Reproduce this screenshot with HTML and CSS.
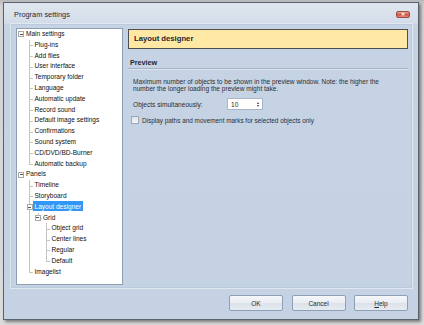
FILE: index.html
```html
<!DOCTYPE html>
<html>
<head>
<meta charset="utf-8">
<link rel="stylesheet" href="styles.css">
</head>
<body>
<div class="window">
  <div class="titlebar">
    <span class="title">Program settings</span>
    <span class="close">&#x2715;</span>
  </div>
  <div class="frame">
    <div class="treebox">
      <ul class="tree">
        <li class="l0"><div class="row"><span class="exp"></span><span class="txt">Main settings</span></div>
          <ul>
            <li class="l1"><div class="row"><span class="txt">Plug-ins</span></div></li>
            <li class="l1"><div class="row"><span class="txt">Add files</span></div></li>
            <li class="l1"><div class="row"><span class="txt">User interface</span></div></li>
            <li class="l1"><div class="row"><span class="txt">Temporary folder</span></div></li>
            <li class="l1"><div class="row"><span class="txt">Language</span></div></li>
            <li class="l1"><div class="row"><span class="txt">Automatic update</span></div></li>
            <li class="l1"><div class="row"><span class="txt">Record sound</span></div></li>
            <li class="l1"><div class="row"><span class="txt">Default image settings</span></div></li>
            <li class="l1"><div class="row"><span class="txt">Confirmations</span></div></li>
            <li class="l1"><div class="row"><span class="txt">Sound system</span></div></li>
            <li class="l1"><div class="row"><span class="txt">CD/DVD/BD-Burner</span></div></li>
            <li class="l1"><div class="row"><span class="txt">Automatic backup</span></div></li>
          </ul>
        </li>
        <li class="l0"><div class="row"><span class="exp"></span><span class="txt">Panels</span></div>
          <ul>
            <li class="l1"><div class="row"><span class="txt">Timeline</span></div></li>
            <li class="l1"><div class="row"><span class="txt">Storyboard</span></div></li>
            <li class="l1"><div class="row"><span class="exp"></span><span class="txt sel">Layout designer</span></div>
              <ul>
                <li class="l2"><div class="row"><span class="exp"></span><span class="txt">Grid</span></div>
                  <ul>
                    <li class="l3"><div class="row"><span class="txt">Object grid</span></div></li>
                    <li class="l3"><div class="row"><span class="txt">Center lines</span></div></li>
                    <li class="l3"><div class="row"><span class="txt">Regular</span></div></li>
                    <li class="l3"><div class="row"><span class="txt">Default</span></div></li>
                  </ul>
                </li>
              </ul>
            </li>
            <li class="l1"><div class="row"><span class="txt">Imagelist</span></div></li>
          </ul>
        </li>
      </ul>
    </div>
    <div class="pane">
      <div class="header">Layout designer</div>
      <div class="section">Preview</div>
      <p class="desc">Maximum number of objects to be shown in the preview window. Note: the higher the number the longer loading the preview might take.</p>
      <div class="field">
        <span class="label">Objects simultaneously:</span>
        <span class="spin"><span class="val">10</span><span class="arrows"><span class="up"></span><span class="down"></span></span></span>
      </div>
      <div class="check">
        <span class="box"></span>
        <span class="ctext">Display paths and movement marks for selected objects only</span>
      </div>
    </div>
  </div>
  <div class="footer">
    <button class="btn">OK</button>
    <button class="btn">Cancel</button>
    <button class="btn"><u>H</u>elp</button>
  </div>
</div>
</body>
</html>
```

FILE: styles.css
```css
html, body {
  margin: 0;
  padding: 0;
}
body {
  width: 424px;
  height: 325px;
  overflow: hidden;
  background: linear-gradient(#b9b9b9, #d4d4d4 6px, #dcdcdc);
  font-family: "Liberation Sans", Arial, sans-serif;
  color: #1b1b1b;
}
.window {
  box-sizing: border-box;
  width: 416px;
  height: 318px;
  margin: 2px 0 0 3px;
  border: 1px solid #59616d;
  background: linear-gradient(#dfe6ef 0, #d2dce8 21px, #c5d3e4 21px, #c4d2e3 100%);
  box-shadow: 2px 2px 3px rgba(0, 0, 0, 0.45);
  display: flex;
  flex-direction: column;
  padding: 0 5px 2px 6px;
}
.titlebar {
  height: 20px;
  display: flex;
  align-items: center;
  justify-content: space-between;
  padding-left: 4px;
}
.title {
  font-size: 7.4px;
  color: #1f2a3a;
  margin-top: 3px;
}
.close {
  box-sizing: border-box;
  width: 14px;
  height: 7px;
  margin-top: 3px;
  margin-right: 3px;
  border: 1px solid #9a4a44;
  border-radius: 2px;
  background: linear-gradient(#e9a59c, #cf5a4e 50%, #c8483c 51%, #e58b7c);
  color: #fff;
  font-size: 5px;
  line-height: 5px;
  text-align: center;
  font-weight: bold;
}
.frame {
  flex: 1;
  display: flex;
  border: 1px solid #dfe7f1;
  box-shadow: inset 0 0 0 1px #bccadd;
  padding: 4px 0 3px 5px;
}
.treebox {
  box-sizing: border-box;
  flex: 0 0 107px;
  width: 107px;
  margin-right: 5px;
  background: #fff;
  border: 1px solid #8fa0b5;
}
.tree, .tree ul {
  list-style: none;
  margin: 0;
  padding: 0;
}
.tree li {
  position: relative;
}
.row {
  height: 10.8px;
  line-height: 10.8px;
  font-size: 6.55px;
  position: relative;
  white-space: nowrap;
  color: #111;
}
.l0 > .row { padding-left: 9px; }
.l1 > .row { padding-left: 17.5px; }
.l2 > .row { padding-left: 26px; }
.l3 > .row { padding-left: 34.5px; }

.l1::before, .l2::before, .l3::before {
  content: "";
  position: absolute;
  top: 0;
  bottom: 0;
  border-left: 1px solid #c4c4c4;
}
.l1:last-child::before, .l2:last-child::before, .l3:last-child::before {
  bottom: auto;
  height: 5.4px;
}
.l1::after, .l2::after, .l3::after {
  content: "";
  position: absolute;
  top: 5.4px;
  width: 4px;
  border-top: 1px solid #c4c4c4;
}
.l1::before, .l1::after { left: 12px; }
.l2::before, .l2::after { left: 20.5px; }
.l3::before, .l3::after { left: 29px; }

.exp {
  position: absolute;
  top: 2.4px;
  box-sizing: border-box;
  width: 6px;
  height: 6px;
  border: 1px solid #a8a8a8;
  background: #fff;
  z-index: 1;
}
.exp::after {
  content: "";
  position: absolute;
  left: 0.5px;
  top: 1.5px;
  width: 3px;
  border-top: 1px solid #555;
}
.l0 > .row > .exp { left: 1px; }
.l1 > .row > .exp { left: 9.5px; }
.l2 > .row > .exp { left: 17.5px; }

.txt.sel {
  background: #3296f5;
  color: #fff;
  padding: 1.5px 1.5px;
  margin-left: -1.5px;
}

.pane {
  flex: 1;
  min-width: 0;
  display: flex;
  flex-direction: column;
  padding-top: 1px;
  margin-right: 4px;
}
.header {
  box-sizing: border-box;
  height: 20px;
  background: #fee8a3;
  border: 1px solid #4f4f4f;
  font-weight: bold;
  font-size: 7.7px;
  line-height: 18px;
  padding-left: 5px;
  color: #1e2633;
}
.section {
  margin-top: 8.5px;
  font-weight: bold;
  font-size: 7.2px;
  line-height: 9px;
  padding-left: 2px;
  padding-bottom: 1px;
  border-bottom: 1px solid #a6b4c6;
  box-shadow: 0 1px 0 #dbe4ee;
  color: #1e2633;
}
.desc {
  margin: 9px 0 0 0;
  padding-left: 5px;
  width: 262px;
  font-size: 6.55px;
  line-height: 7.8px;
  color: #2b2f36;
}
.field {
  display: flex;
  align-items: center;
  margin-top: 5px;
  height: 12px;
  padding-left: 5px;
  font-size: 6.6px;
  color: #2b2f36;
}
.label {
  width: 94px;
}
.spin {
  box-sizing: border-box;
  width: 36px;
  height: 12px;
  border: 1px solid #a9b6c7;
  background: #fff;
  display: flex;
  align-items: center;
  justify-content: space-between;
  padding: 0 3px 0 3px;
}
.arrows {
  display: flex;
  flex-direction: column;
  gap: 1px;
}
.up {
  width: 0;
  height: 0;
  border-left: 1.5px solid transparent;
  border-right: 1.5px solid transparent;
  border-bottom: 2px solid #333;
}
.down {
  width: 0;
  height: 0;
  border-left: 1.5px solid transparent;
  border-right: 1.5px solid transparent;
  border-top: 2px solid #333;
}
.check {
  display: flex;
  align-items: center;
  margin-top: 6px;
  padding-left: 3px;
  font-size: 6.4px;
  color: #2b2f36;
}
.box {
  box-sizing: border-box;
  width: 8px;
  height: 8px;
  border: 1px solid #9aa8ba;
  background: linear-gradient(#dfe5ec, #f4f6f9);
  margin-right: 3px;
}
.footer {
  height: 28px;
  box-sizing: border-box;
  display: flex;
  justify-content: flex-end;
  align-items: flex-start;
  padding: 6px 5px 0 0;
  gap: 8.5px;
}
.btn {
  box-sizing: border-box;
  width: 54px;
  height: 16px;
  border: 1px solid #8fa0b6;
  border-radius: 2px;
  background: linear-gradient(#f6f8fa, #e8ecf1 50%, #dce2ea 51%, #e6ebf1);
  font-family: "Liberation Sans", Arial, sans-serif;
  font-size: 6.5px;
  color: #2b2f36;
  padding: 0;
}
.btn u {
  text-decoration: underline;
}
```
